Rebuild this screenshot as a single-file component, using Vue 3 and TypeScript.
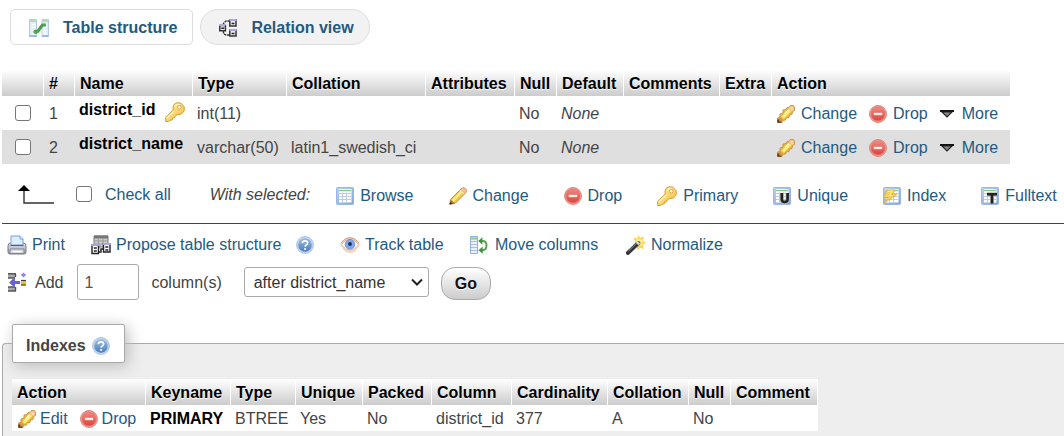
<script setup lang="ts">
import { ref } from 'vue'

interface Column {
  id: number
  name: string
  primary: boolean
  type: string
  collation: string
}

const columns: Column[] = [
  { id: 1, name: 'district_id', primary: true, type: 'int(11)', collation: '' },
  { id: 2, name: 'district_name', primary: false, type: 'varchar(50)', collation: 'latin1_swedish_ci' },
]

const bulkActions = [
  { icon: 'table', label: 'Browse' },
  { icon: 'pencil', label: 'Change' },
  { icon: 'drop', label: 'Drop' },
  { icon: 'key', label: 'Primary' },
  { icon: 'unique', label: 'Unique' },
  { icon: 'index', label: 'Index' },
  { icon: 'fulltext', label: 'Fulltext' },
]

const checked = ref<number[]>([])
const howMany = ref('1')
const position = ref('district_name')

function toggleAll(event: Event) {
  const on = (event.target as HTMLInputElement).checked
  checked.value = on ? columns.map((c) => c.id) : []
}
</script>

<template>
  <svg class="sprite" aria-hidden="true">
    <defs>
      <linearGradient id="g-blue" x1="0" y1="0" x2="1" y2="1">
        <stop offset="0" stop-color="#bcd4f3" /><stop offset="1" stop-color="#7fa3d9" />
      </linearGradient>
      <linearGradient id="g-red" x1="0" y1="0" x2="0" y2="1">
        <stop offset="0" stop-color="#f08a80" /><stop offset="1" stop-color="#dc4238" />
      </linearGradient>
      <linearGradient id="g-gold" x1="0" y1="0" x2="1" y2="1">
        <stop offset="0" stop-color="#fff0a0" /><stop offset="1" stop-color="#f3bd3c" />
      </linearGradient>
      <linearGradient id="g-help" x1="0" y1="0" x2="0" y2="1">
        <stop offset="0" stop-color="#9dbde2" /><stop offset="1" stop-color="#4a7dbb" />
      </linearGradient>
      <linearGradient id="g-print" x1="0" y1="0" x2="0" y2="1">
        <stop offset="0" stop-color="#e4e6ea" /><stop offset="1" stop-color="#9599a1" />
      </linearGradient>
    </defs>
    <symbol id="i-table" viewBox="0 0 18 18">
      <rect x=".5" y=".5" width="17" height="17" rx="1" fill="url(#g-blue)" stroke="#9ab8e6" />
      <rect x="3" y="2" width="12.5" height="13.5" fill="#fff" />
      <path d="M3 3.5h12" stroke="#84ce74" stroke-width="1.4" />
      <path d="M3 6.5h12M3 9.5h12M3 12.5h12M6.5 5.5v10M10.5 5.5v10" stroke="#b9cdea" />
    </symbol>
    <symbol id="i-unique" viewBox="0 0 18 18">
      <use href="#i-table" />
      <path d="M8.8 6v6.2q0 3 2.9 3t2.9-3V6" fill="none" stroke="#bbb" stroke-width="4" />
      <path d="M8.8 6v6.2q0 2.8 2.9 2.8t2.9-2.8V6" fill="none" stroke="#222" stroke-width="2.6" />
    </symbol>
    <symbol id="i-fulltext" viewBox="0 0 18 18">
      <use href="#i-table" />
      <path d="M6 7.2h10M11 7.2v9" stroke="#bbb" stroke-width="4" />
      <path d="M6 7.2h10M11 7v9.5" stroke="#222" stroke-width="2.6" />
    </symbol>
    <symbol id="i-index" viewBox="0 0 18 18">
      <use href="#i-table" />
      <path d="M3.8 3h8.4L9 7h5L.6 16.5 5 10.5H.4z" fill="#f8cf56" stroke="#e3aa36" stroke-width=".8" />
      <path d="M5.2 4.4h4L6.4 8.5h3.2" fill="none" stroke="#fff0a8" stroke-width="1.2" />
    </symbol>
    <symbol id="i-pencil" viewBox="0 0 18 18">
      <path d="M.7 17.3 1.6 12.4 12.2 1.7Q14 0 16 1.2L17.2 2.5Q18 4.4 16.6 5.9L6.1 16.4z" fill="#f3c74b" stroke="#b88442" stroke-width=".9" />
      <path d="M3 13 12.2 3.8l1.6 1.5-9.4 9.4z" fill="#fff08b" />
      <path d="m12.1 2.2 1.4-1 2.3.3 1.5 1.7-.2 1.9-1.2 1.2z" fill="#f3bd9c" />
      <path d="m11 3.1 4 3.9" stroke="#eee2bc" stroke-width="1.3" />
      <path d="m1.7 12.8 4 3.6-5 1.2z" fill="#a7652d" />
      <path d="m1.1 15.2 1.7 1.6-2.2.8z" fill="#33200e" />
    </symbol>
    <symbol id="i-edit" viewBox="0 0 18 18">
      <path d="M.6 17.5V13l2.4-1V9l3-1V5l3-.5L10 2.5l3-.5V.6h3.4L17.5 2v3.5l-2 1-.5 3-2.5.5L12 12.5l-3 .5-.5 2-3 .5-.5 2z" fill="#eeb73d" stroke="#c58f48" stroke-width=".9" />
      <path d="m4.5 11.5 7.5-7.5 2.2 2.2-7.4 7.5z" fill="#ffef72" />
      <path d="M12.5 3.5v-2h3.7l.5.8v2.8l-2 .9z" fill="#f8d4b2" />
      <path d="m8 8.5 3.6-3.7" stroke="#fffbd0" stroke-width="1.6" />
      <path d="M1.2 13.3 3.3 12 6 14.8 4.4 17H1z" fill="#d59b4d" />
      <path d="M.3 14.4h2v2h2.2v1.3H.3z" fill="#633a19" />
    </symbol>
    <symbol id="i-drop" viewBox="0 0 18 18">
      <circle cx="9" cy="9" r="8.4" fill="#f6b8b3" stroke="#dc7771" />
      <circle cx="9" cy="9" r="7.1" fill="url(#g-red)" stroke="#e8746c" />
      <rect x="4.5" y="7.6" width="9" height="2.6" rx=".4" fill="#fff" stroke="#d9564e" stroke-width=".5" />
    </symbol>
    <symbol id="i-key" viewBox="0 0 20 20">
      <path d="M9 2.5 12 .7l4 .5 3.2 3.6v4L16.5 12l-4.4.7-2 1.5-.5 1.6-2 .2-.5 2-2 .2-1.4 1.3H.7v-4L8.2 8 8 5z" fill="url(#g-gold)" stroke="#d89a31" stroke-width="1" />
      <path d="m1.7 16.3 7.5-7.4M10 4.3l2.4-1.9 3 .5" fill="none" stroke="#fff6c4" stroke-width="1.2" />
      <circle cx="14.3" cy="5.2" r="1.8" fill="#fff" stroke="#d29a3c" stroke-width=".8" />
    </symbol>
    <symbol id="i-help" viewBox="0 0 18 18">
      <circle cx="9" cy="9" r="8.4" fill="#c3d7ef" stroke="#a6c3e4" />
      <circle cx="9" cy="9" r="6.8" fill="url(#g-help)" />
      <path d="M6.3 7.2Q6.5 4.8 9 4.8t2.6 2.1q0 1.3-1.4 2.1-1 .6-1.1 1.7" fill="none" stroke="#fff" stroke-width="1.7" />
      <circle cx="9.1" cy="13" r="1.1" fill="#fff" />
    </symbol>
    <symbol id="i-structure" viewBox="0 0 20 18">
      <path d="M.5.5h7v17h-7zM13 .5h6.5v17H13z" fill="#dfeafa" stroke="#b4cbec" />
      <path d="M.5 17h7M13 17h6.5" stroke="#8db0e0" stroke-width="1.6" />
      <path d="M1 2h6M13.5 2h6" stroke="#a6d69c" stroke-width="1.5" />
      <path d="M2.5 5.5H7M2.5 8.5H7M2.5 11.5H7M2.5 14.5H7M13.5 5.5h4M13.5 8.5h4M13.5 11.5h4M13.5 14.5h4" stroke="#fff" stroke-width="1.4" />
      <path d="M5.8 13 8.6 12.6 13.4 6h3.4" fill="none" stroke="#4c9e48" stroke-width="3.2" />
      <circle cx="6.6" cy="12.7" r="2.3" fill="#55a84f" />
    </symbol>
    <symbol id="i-relation" viewBox="0 0 18 18">
      <path d="M4.5 6V4.5L7 2h4M4.5 12v2.5L7 16h4" fill="none" stroke="#333" stroke-width="1.4" stroke-dasharray="2.4 .8" />
      <path d="M.8 6.4h5.6v5.4H.8zM10.8 1h6.2v6h-6.2zM10.8 11h6.2v6h-6.2z" fill="#eee" stroke="#343438" stroke-width="1.5" />
      <path d="M0 6h6.5M10.5 1h7M10.5 11h7" stroke="#b0a6e2" stroke-width="2" />
      <path d="M2.3 9.3h2.8M12.6 4.6h2.8M12.6 14.5h2.8" stroke="#222" stroke-width="1.5" />
    </symbol>
    <symbol id="i-print" viewBox="0 0 20 20">
      <path d="M1 11q0-3 2.5-3h13q2.5 0 2.5 3v6q0 2-2 2H3q-2 0-2-2z" fill="url(#g-print)" stroke="#777b83" />
      <path d="M4 10V1h9l3 2.5V10z" fill="#dfeeff" stroke="#72a1df" />
      <path d="M13 1v3h3" fill="#fff" stroke="#72a1df" />
      <path d="M3.5 10.5h13" stroke="#565b65" />
      <path d="M3 14h14v4.5H3z" fill="#d4d7dc" stroke="#777b83" stroke-width=".8" />
      <path d="M5.5 16.5h9" stroke="#fff" stroke-width="1.2" />
    </symbol>
    <symbol id="i-propose" viewBox="0 0 20 20">
      <path d="M3 1h14v11H3z" fill="#ccc" stroke="#777" />
      <path d="M3 2h14" stroke="#777" stroke-width="3" />
      <path d="M3 6h14M3 9h14M7.5 4v8M12 4v8" stroke="#999" />
      <path d="M1 10h6.5v8.5H1zM12.5 9H19v8h-6.5z" fill="#fff" stroke="#222" stroke-width="1.4" />
      <path d="M.3 10h8M12 9h7.7" stroke="#aaa1dd" stroke-width="2" />
      <path d="M2.8 13h3M2.8 16h3M14.3 12h3M14.3 15h3M8 17h2v-3h3" fill="none" stroke="#222" stroke-width="1.4" />
    </symbol>
    <symbol id="i-eye" viewBox="0 0 20 18">
      <path d="M.3 8.5Q3.5 1 10 1t9.7 7.5Q16 17 10 17T.3 8.5" fill="#f3d4bd" />
      <path d="M1.5 8.7Q5 3.4 10 3.4t8.5 5.3Q15 14 10 14T1.5 8.7" fill="#fff" stroke="#d8ad91" stroke-width=".8" />
      <path d="M1 7Q5 1.7 10 1.7T19 7" fill="none" stroke="#cda082" />
      <circle cx="10" cy="8.3" r="4.8" fill="#83a9ec" stroke="#6589cc" stroke-width=".8" />
      <circle cx="10" cy="8" r="1.9" fill="#202e52" />
    </symbol>
    <symbol id="i-move" viewBox="0 0 18 18">
      <path d="M.5.5h7v17h-7z" fill="#e9f1fc" stroke="#8fb1df" />
      <path d="M1 2.5h6" stroke="#8acb7e" stroke-width="2" />
      <path d="M1 5.5h6M1 8.5h6M1 11.5h6M1 14.5h6" stroke="#a7c1e6" />
      <path d="M9 5h3.5q4 0 4 4.3 0 5-4 5H10" fill="none" stroke="#58a052" stroke-width="1.9" />
      <path d="M12.4 1.2 8.2 5l4.2 3.8zM12.7 10.5l-4.2 3.7 4.2 3.6z" fill="#479143" />
    </symbol>
    <symbol id="i-wand" viewBox="0 0 20 20">
      <path d="m12.5 0 1.6 3L18 1.4l-1.2 4L20 8l-3.7 1.8L18 14l-4.2-1.2-2 2.7-1.2-4L7 10l2.6-2.5L7.2 2.6l4 1.2z" fill="#ffd34a" />
      <circle cx="13.3" cy="7.2" r="3.4" fill="#ffeb94" />
      <path d="m1.8 18 10.6-10" stroke="#35373d" stroke-width="3.8" stroke-linecap="round" />
      <path d="m2.5 16 9-8.6" stroke="#8d9098" />
      <path d="m11.2 9 1.8-1.7" stroke="#d8dadd" stroke-width="3.4" />
    </symbol>
    <symbol id="i-add" viewBox="0 0 18 20">
      <path d="M0 2h7v4H0zM0 15h7v4H0z" fill="#aaa" />
      <path d="M0 1.7h8M0 6h7M0 15h7M0 19h8M7.5 2v3M7.5 15v4" stroke="#555" stroke-width="1.4" />
      <path d="M1 10.5 7 5v4h5v3H7v4z" fill="#6a61d2" />
      <path d="M13 8h5v5.5h-5z" fill="#e8bd2c" /><path d="M13 8.4h5M13 13h5" stroke="#343434" />
      <path d="M15.5.8v4.4M13.3 3h4.4" stroke="#8d89df" stroke-width="1.8" />
    </symbol>
    <symbol id="i-more" viewBox="0 0 14 8">
      <path d="M0 1h14" stroke="#111" stroke-width="2" />
      <path d="M2 2h10L7 7z" fill="#888" stroke="#222" stroke-width="1.1" />
    </symbol>
  </svg>

  <main class="page">
    <nav class="tabs">
      <a href="#structure" class="tab active"><svg class="w20"><use href="#i-structure" /></svg>Table structure</a>
      <a href="#relation" class="tab"><svg class="w18"><use href="#i-relation" /></svg>Relation view</a>
    </nav>

    <table class="grid structure">
      <colgroup>
        <col class="c-check"><col class="c-num"><col class="c-name"><col class="c-type"><col class="c-coll"><col class="c-attr">
        <col class="c-null"><col class="c-def"><col class="c-comm"><col class="c-extra"><col class="c-act">
      </colgroup>
      <thead>
        <tr>
          <th></th><th>#</th><th>Name</th><th>Type</th><th>Collation</th><th>Attributes</th>
          <th>Null</th><th>Default</th><th>Comments</th><th>Extra</th><th>Action</th>
        </tr>
      </thead>
      <tbody>
        <tr v-for="col in columns" :key="col.id">
          <td class="check"><input v-model="checked" type="checkbox" :value="col.id" :aria-label="col.name"></td>
          <td class="num">{{ col.id }}</td>
          <th scope="row" class="name">
            <div class="name-line">
              <span>{{ col.name }}</span>
              <svg v-if="col.primary" class="w20"><use href="#i-key" /></svg>
            </div>
          </th>
          <td>{{ col.type }}</td>
          <td>{{ col.collation }}</td>
          <td></td>
          <td>No</td>
          <td><i>None</i></td>
          <td></td>
          <td></td>
          <td>
            <div class="actions">
              <a href="#change"><svg class="w18"><use href="#i-edit" /></svg>Change</a>
              <a href="#drop"><svg class="w18"><use href="#i-drop" /></svg>Drop</a>
              <a href="#more" class="more"><svg><use href="#i-more" /></svg>More</a>
            </div>
          </td>
        </tr>
      </tbody>
    </table>

    <div class="bulk">
      <svg class="arrow" viewBox="0 0 36 20"><path d="M6 4v15h30" fill="none" stroke="#333" stroke-width="1.4" /><path d="M6 1l6 6H0z" fill="#000" /></svg>
      <input id="check-all" type="checkbox" @change="toggleAll">
      <label for="check-all" class="check-all">Check all</label>
      <i class="with">With selected:</i>
      <a v-for="a in bulkActions" :key="a.label" :href="'#' + a.icon">
        <svg :class="a.icon === 'key' ? 'w20' : 'w18'"><use :href="'#i-' + a.icon" /></svg>{{ a.label }}
      </a>
    </div>

    <div class="tools">
      <a href="#print"><svg class="w20"><use href="#i-print" /></svg>Print</a>
      <a href="#propose"><svg class="w20"><use href="#i-propose" /></svg>Propose table structure</a>
      <a href="#help" aria-label="Documentation"><svg class="w18"><use href="#i-help" /></svg></a>
      <a href="#track"><svg class="w20"><use href="#i-eye" /></svg>Track table</a>
      <a href="#move" class="wide"><svg class="w18"><use href="#i-move" /></svg>Move columns</a>
      <a href="#normalize"><svg class="w20"><use href="#i-wand" /></svg>Normalize</a>
    </div>

    <form class="add" @submit.prevent>
      <svg class="w20"><use href="#i-add" /></svg>
      <label for="how-many">Add</label>
      <input id="how-many" v-model="howMany" type="text">
      <label for="position" class="cols">column(s)</label>
      <span class="select">
        <select id="position" v-model="position">
          <option v-for="col in columns" :key="col.id" :value="col.name">after {{ col.name }}</option>
        </select>
        <svg viewBox="0 0 12 8"><path d="m1 1.5 5 5 5-5" fill="none" stroke="#222" stroke-width="2" /></svg>
      </span>
      <button type="submit">Go</button>
    </form>

    <fieldset class="indexes">
      <legend><span>Indexes<a href="#index-help" aria-label="Documentation"><svg class="w18"><use href="#i-help" /></svg></a></span></legend>
      <table class="grid index-table">
        <colgroup>
          <col class="k-act"><col class="k-key"><col class="k-type"><col class="k-uni"><col class="k-pack"><col class="k-col">
          <col class="k-card"><col class="k-coll"><col class="k-null"><col class="k-comm">
        </colgroup>
        <thead>
          <tr>
            <th>Action</th><th>Keyname</th><th>Type</th><th>Unique</th><th>Packed</th><th>Column</th>
            <th>Cardinality</th><th>Collation</th><th>Null</th><th>Comment</th>
          </tr>
        </thead>
        <tbody>
          <tr>
            <td>
              <div class="actions compact">
                <a href="#edit"><svg class="w18"><use href="#i-edit" /></svg>Edit</a>
                <a href="#drop-index"><svg class="w18"><use href="#i-drop" /></svg>Drop</a>
              </div>
            </td>
            <th scope="row">PRIMARY</th><td>BTREE</td><td>Yes</td><td>No</td><td>district_id</td>
            <td>377</td><td>A</td><td>No</td><td></td>
          </tr>
        </tbody>
      </table>
    </fieldset>
  </main>
</template>

<style>
body {
  background: #fff;
  overflow-x: hidden;
}
</style>

<style scoped>
.sprite { position: absolute; width: 0; height: 0; }
.page {
  font: 16px/18px "Liberation Sans", Arial, sans-serif;
  color: #444;
  padding: 9px 0 0 2px;
}
a { color: #235a81; text-decoration: none; display: inline-flex; align-items: center; gap: 6px; white-space: nowrap; }
svg { flex: none; display: block; }
.w18 { width: 18px; height: 18px; }
.w20 { width: 20px; height: 20px; }

.tabs { display: flex; gap: 7px; padding-left: 8px; }
.tab {
  box-sizing: border-box;
  height: 36px;
  padding: 1px 15px 0 18px;
  gap: 14px;
  border: 1px solid #ddd;
  border-radius: 20px;
  background: #f2f2f2;
  font-weight: bold;
}
.tab.active { background: #fff; border-radius: 5px; }

input[type="checkbox"] {
  appearance: none;
  box-sizing: border-box;
  width: 16px;
  height: 16px;
  margin: 0;
  border: 1px solid #767676;
  border-radius: 3px;
  background: #fff;
  display: block;
  flex: none;
}
input[type="checkbox"]:checked { background: #235a81; }

.grid { border-collapse: separate; border-spacing: 0; white-space: nowrap; }
.grid th, .grid td { box-sizing: border-box; text-align: left; padding: 2px 4px 0; }
.grid th { color: #000; }
.grid thead th {
  height: 26px;
  padding: 2px 5px 0;
  background: linear-gradient(#fff, #ccc);
  border-right: 1px solid #fff;
  text-shadow: 0 1px 0 #fff;
}
.structure { margin-top: 25px; }
.structure thead th:last-child { border-right: 0; }
.structure tbody tr { height: 34px; }
.structure tbody tr:nth-child(even) { background: #dfdfdf; }
.grid .check { padding: 0 0 0 13px; }
.grid .num { padding-left: 5px; }
.name-line { display: flex; gap: 10px; height: 26px; align-items: flex-start; }
.name-line svg { margin-top: 1px; }
.c-check { width: 42px; } .c-num { width: 31px; } .c-name { width: 118px; } .c-type { width: 94px; }
.c-coll { width: 139px; } .c-attr { width: 89px; } .c-null { width: 42px; } .c-def { width: 67px; }
.c-comm { width: 96px; } .c-extra { width: 52px; } .c-act { width: 238px; }

.actions { display: flex; gap: 12px; padding-left: 1px; }
.more { gap: 8px; }
.more svg { width: 14px; height: 8px; }
.compact { gap: 12px; padding-left: 2px; }
.compact a { gap: 4px; }

.bulk {
  box-sizing: border-box;
  display: flex;
  align-items: center;
  gap: 35px;
  height: 60px;
  padding-left: 16px;
  border-bottom: 1px solid #444;
  white-space: nowrap;
}
.bulk > * { flex: none; }
.bulk > a { margin-top: 4px; }
.arrow { width: 36px; height: 20px; margin-right: -13px; }
.bulk > input { margin-right: -22px; }
.check-all { color: #235a81; margin-top: 2px; }
.bulk .with { margin: 2px -9px 0 4px; }

.tools {
  display: grid;
  grid-template-columns: 84px 205px 44px 130px 156px auto;
  padding: 11px 0 0 5px;
  height: 20px;
  align-items: center;
}
.tools a { gap: 5px; }
.tools .wide { gap: 7px; }

.add { display: flex; align-items: center; padding: 9px 0 0 5px; }
.add label { margin-left: 8px; padding-top: 2px; }
.add input {
  box-sizing: border-box;
  width: 62px;
  height: 36px;
  margin-left: 14px;
  padding: 2px 6px 0;
  border: 1px solid #aaa;
  border-radius: 3px;
  font: inherit;
  color: #555;
  background: #fff;
}
.add .cols { margin-left: 12px; }
.select { display: grid; align-items: center; margin-left: 22px; }
.select > * { grid-area: 1 / 1; }
.select svg { width: 12px; height: 8px; justify-self: end; margin-right: 6px; pointer-events: none; }
.select select {
  appearance: none;
  width: 185px;
  height: 30px;
  padding: 1px 9px 0;
  border: 1px solid #aaa;
  border-radius: 3px;
  background: #fff;
  color: #333;
  font: inherit;
}
.add button {
  height: 33px;
  margin: 2px 0 0 12px;
  padding: 2px 13px 0;
  border: 1px solid #aaa;
  border-radius: 14px;
  background: linear-gradient(#fff, #ccc);
  color: #111;
  font: inherit;
  font-weight: bold;
  text-shadow: 0 1px 0 #fff;
}

.indexes {
  margin: 24px 0 0;
  padding: 16px 9px 5px;
  border: 1px solid #aaa;
  border-right: 0;
  border-bottom: 0;
  border-radius: 4px 0 0 0;
  background: #eee;
  min-width: 0;
}
.indexes legend {
  box-sizing: border-box;
  height: 39px;
  padding: 2px 14px 0 13px;
  border: 1px solid #aaa;
  border-radius: 2px;
  background: #fff;
  box-shadow: 3px 3px 15px #bbb;
  font-weight: bold;
}
.indexes legend span { display: flex; align-items: center; gap: 6px; height: 37px; }
.index-table tbody tr { height: 26px; background: #fff; }
.k-act { width: 134px; } .k-key { width: 85px; } .k-type { width: 65px; } .k-uni { width: 67px; }
.k-pack { width: 69px; } .k-col { width: 80px; } .k-card { width: 96px; } .k-coll { width: 81px; }
.k-null { width: 42px; } .k-comm { width: 87px; }
</style>
